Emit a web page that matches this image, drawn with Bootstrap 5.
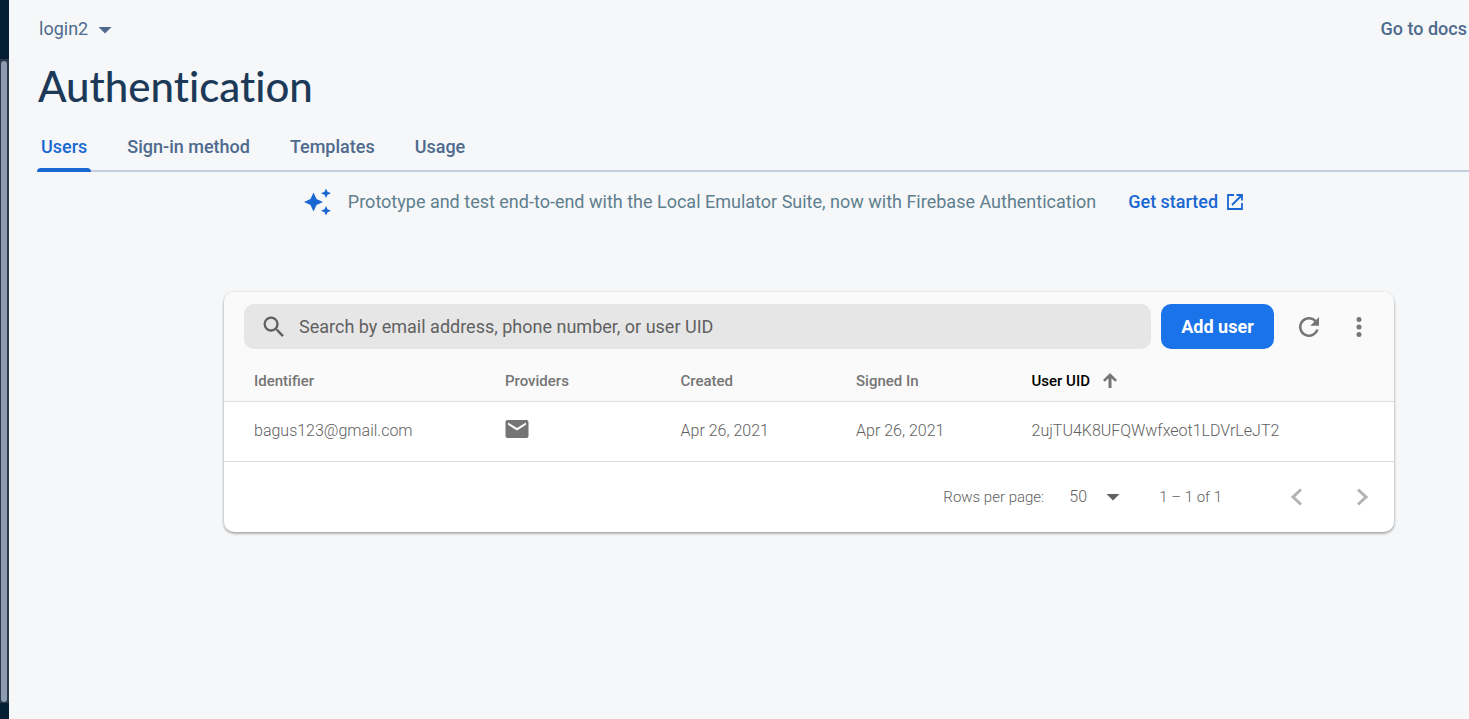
<!DOCTYPE html>
<html lang="en">
<head>
<meta charset="utf-8">
<meta name="viewport" content="width=device-width, initial-scale=1">
<title>Authentication</title>
<link href="https://cdn.jsdelivr.net/npm/bootstrap@5.3.0/dist/css/bootstrap.min.css" rel="stylesheet">
<style>
  body { font-family: Roboto, "Liberation Sans", sans-serif; background: #f5f7f9; color: #757575; font-size: 16px; line-height: 24px; }
  svg { display: block; fill: currentColor; flex: none; }
  svg.line-icon { fill: none; stroke: currentColor; }
  a { text-decoration: none; }
  .plain { border: 0; background: none; padding: 0; color: inherit; }
  .rail { width: 9px; background: #051e34; padding-top: 59px; padding-bottom: 16px; }
  .rail-track { background: #2b384c; padding: 2px 2px 1px 1px; }
  .rail-thumb { background: #8c9bb0; border-radius: 3px; }
  .slate { color: #4e6a8d; font-size: 18px; font-weight: 500; }
  .plain.slate { color: #4e6a8d; font-weight: 400; }
  .topbar { padding: 17px 2px 0 30px; }
  .page-title { font-family: Lato, sans-serif; font-size: 42px; line-height: 48px; color: #1c3a57; font-weight: 500; font-variant-ligatures: none; padding-left: 29px; margin: 21px 0 0; }
  .tabs { margin: 22px 0 0 28px; gap: 32px; border-bottom: 2px solid #c3cfdd; }
  .tabs .nav-link { color: #4e6a8d; font-size: 18px; font-weight: 500; padding: 3px 4px 0; margin-bottom: -2px; }
  .tabs .nav-link::after { content: ""; display: block; height: 4px; margin: 9px -4px 0; }
  .tabs .nav-link.active { color: #1967d2; }
  .tabs .nav-link.active::after { background: #1967d2; border-radius: 4px 4px 0 0; }
  .banner { padding: 16px 0 0 70px; font-size: 18px; line-height: 28px; font-weight: 400; color: #5f7f8e; }
  .banner a { color: #1967d2; font-weight: 500; }
  .spark { color: #1967d2; }
  .users-wrap { padding: 76px 0 0 140px; }
  .users { max-width: 1170px; background: #fff; border-radius: 10px; box-shadow: 0 1px 3px rgba(0,0,0,.32), 0 2px 3px rgba(0,0,0,.12); overflow: hidden; }
  .users-tools { background: #fafafa; padding: 12px 20px; }
  .search { background: #e6e6e6; border-radius: 10px; height: 45px; padding: 0 16px; gap: 11px; color: #616161; }
  .search input { border: 0; outline: 0; background: none; min-width: 0; padding: 0; font-size: 18px; color: #616161; }
  .search input::placeholder { color: #616161; opacity: 1; }
  .add-user { background: #1a73e8; color: #fff; border: 0; border-radius: 10px; height: 45px; min-width: 113px; margin-left: 10px; padding: 0 20px; font-size: 18px; font-weight: 700; }
  .users-table { width: 100%; table-layout: fixed; }
  .users-table th { background: #fafafa; font-size: 15px; font-weight: 500; height: 40px; padding-bottom: 1px; border-bottom: 1px solid #dcdcdc; }
  .users-table td { font-size: 16px; font-weight: 300; height: 60px; padding-bottom: 2px; border-bottom: 1px solid #dcdcdc; color: #616161; }
  .users-table td svg { margin-bottom: 3px; }
  .users-table th:first-child, .users-table td:first-child { padding-left: 30px; }
  .w-id { width: 280px; } .w-mid { width: 15%; }
  .muted { color: #757575; }
  .pager { height: 70px; padding-right: 18px; font-size: 15px; font-weight: 300; color: #616161; }
  .pager select { appearance: none; border: 0; background: none; color: inherit; font: inherit; font-size: 16px; width: 51px; padding: 0; }
  .pager-size { display: grid; align-items: center; margin: 0 39px 0 25px; }
  .pager-size > * { grid-area: 1 / 1; }
  .pager-size svg { justify-self: end; pointer-events: none; }
  .pager button { color: #b3b3b3; }
</style>
</head>
<body>
<div class="d-flex min-vh-100">
  <div class="rail d-flex flex-column flex-shrink-0">
    <div class="rail-track d-flex flex-grow-1"><div class="rail-thumb flex-grow-1"></div></div>
  </div>
  <main class="flex-grow-1">
    <header class="topbar d-flex justify-content-between align-items-center">
      <button class="plain slate d-flex align-items-center" type="button">login2
        <svg class="ms-2" width="18" height="24" viewBox="0 0 18 24"><path d="M2.500 10h13L9 16.500z"/></svg></button>
      <a class="slate" href="#">Go to docs</a>
    </header>
    <h1 class="page-title">Authentication</h1>
    <nav class="tabs nav">
      <a class="nav-link active" href="#">Users</a>
      <a class="nav-link" href="#">Sign-in method</a>
      <a class="nav-link" href="#">Templates</a>
      <a class="nav-link" href="#">Usage</a>
    </nav>
    <div class="banner d-flex justify-content-center align-items-center">
      <svg class="spark me-3" width="28" height="28" viewBox="0 0 28 28"><path d="M9.500 4.500l3 6.500 6.500 3-6.500 3-3 6.500-3-6.500L0 14l6.500-3zM22 .500l1.500 3.300L27 5.300l-3.500 1.500L22 10l-1.500-3.200L17 5.300l3.500-1.500zM22 18l1.500 3.200 3.500 1.500-3.500 1.500L22 27.500l-1.500-3.300-3.500-1.500 3.500-1.500z"/></svg>
      <span>Prototype and test end-to-end with the Local Emulator Suite, now with Firebase Authentication</span>
      <a class="d-flex align-items-center gap-2 ms-4 ps-2" href="#">Get started
        <svg class="line-icon" width="18" height="18" viewBox="0 0 18 18" stroke-width="1.800"><path d="M8 2H2v14h14v-6M10.500 2H16v5.500M16 2L6 12"/></svg></a>
    </div>
    <div class="users-wrap d-flex justify-content-center">
      <section class="users flex-grow-1">
        <div class="users-tools d-flex align-items-center">
          <label class="search d-flex align-items-center flex-grow-1">
            <svg width="28" height="28" viewBox="0 0 24 24"><path d="M15.500 14h-.790l-.280-.270A6.470 6.470 0 0 0 16 9.500 6.500 6.500 0 1 0 9.500 16c1.610 0 3.090-.590 4.230-1.570l.270.280v.790l5 4.990L20.490 19zm-6 0a4.500 4.500 0 1 1 0-9 4.500 4.500 0 0 1 0 9z"/></svg>
            <input class="flex-grow-1" type="text" aria-label="Search users" placeholder="Search by email address, phone number, or user UID">
          </label>
          <button class="add-user" type="button">Add user</button>
          <button class="plain ms-3 ps-1" type="button" aria-label="Refresh"><svg width="30" height="30" viewBox="0 0 24 24"><path d="M17.650 6.350A8 8 0 1 0 19.730 14h-2.080A6 6 0 1 1 12 6c1.660 0 3.140.690 4.220 1.780L13 11h7V4z"/></svg></button>
          <button class="plain ms-3 ps-1" type="button" aria-label="More options"><svg width="30" height="30" viewBox="0 0 24 24"><path d="M12 8a2 2 0 1 0 0-4 2 2 0 0 0 0 4zm0 2a2 2 0 1 0 0 4 2 2 0 0 0 0-4zm0 6a2 2 0 1 0 0 4 2 2 0 0 0 0-4z"/></svg></button>
        </div>
        <table class="users-table">
          <thead><tr>
            <th class="w-id" scope="col">Identifier</th><th class="w-mid" scope="col">Providers</th>
            <th class="w-mid" scope="col">Created</th><th class="w-mid" scope="col">Signed In</th>
            <th class="text-black" scope="col"><span class="d-flex align-items-center">User UID
              <svg class="muted ms-2" width="24" height="24" viewBox="0 0 24 24"><path d="M12 4l7 7-1.800 1.700-3.700-3.500V19h-3V9.200l-3.700 3.500L5 11z"/></svg></span></th>
          </tr></thead>
          <tbody><tr>
            <td>bagus123@gmail.com</td>
            <td><svg class="muted" width="24" height="20" viewBox="0 0 24 20" role="img" aria-label="Email"><path fill-rule="evenodd" d="M2.500 1h19A2 2 0 0 1 23.500 3v14a2 2 0 0 1-2 2h-19a2 2 0 0 1-2-2V3a2 2 0 0 1 2-2zM3 3.500v2.300l9 5.700 9-5.700V3.500L12 9z"/></svg></td>
            <td>Apr 26, 2021</td><td>Apr 26, 2021</td><td>2ujTU4K8UFQWwfxeot1LDVrLeJT2</td>
          </tr></tbody>
        </table>
        <div class="pager d-flex align-items-center justify-content-end">
          <label for="rows">Rows per page:</label>
          <div class="pager-size"><select id="rows"><option>50</option><option>100</option></select>
            <svg width="14" height="8" viewBox="0 0 14 8"><path d="M.500 1h13L7 7.500z"/></svg></div>
          <span>1 – 1 of 1</span>
          <button class="plain ms-5 me-3 ps-2 pe-3" type="button" aria-label="Previous page"><svg class="line-icon" width="34" height="32" viewBox="0 0 34 32" stroke-width="3"><path d="M23 8.500L15 16l8 7.500"/></svg></button>
          <button class="plain" type="button" aria-label="Next page"><svg class="line-icon" width="32" height="32" viewBox="0 0 32 32" stroke-width="3"><path d="M14 8.500l8 7.500-8 7.500"/></svg></button>
        </div>
      </section>
    </div>
  </main>
</div>
<script src="https://cdn.jsdelivr.net/npm/bootstrap@5.3.0/dist/js/bootstrap.bundle.min.js"></script>
</body>
</html>
